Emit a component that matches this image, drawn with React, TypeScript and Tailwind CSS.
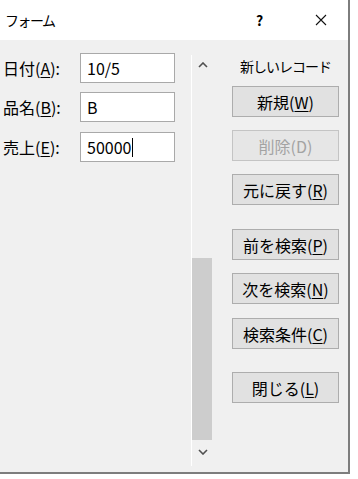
import React from "react";

const FONT = { fontFamily: '"Noto Sans CJK JP", "Noto Sans", sans-serif' };

function U({ c }: { c: string }) {
  return <span className="underline underline-offset-2 decoration-1">{c}</span>;
}

function Row({ label, k, value, caret, mt }: { label: string; k: string; value: string; caret?: boolean; mt: string }) {
  return (
    <div className={`flex items-center h-[30px] ${mt}`}>
      <div className="w-[80px] pl-[3px] text-[16px] leading-none text-black">
        {label}(<U c={k} />):
      </div>
      <div className="w-[95px] h-[30px] bg-white border border-[#a9a9a9] flex items-center pl-[6px] text-[16px] leading-none text-black">
        {value}
        {caret && <span className="inline-block w-px h-[19px] bg-black ml-px" />}
      </div>
    </div>
  );
}

function Btn({ label, k, disabled, mt }: { label: string; k: string; disabled?: boolean; mt: string }) {
  return (
    <div
      className={`w-[107px] h-[31px] flex items-center justify-center text-[16px] leading-none border ${mt} ${
        disabled ? "bg-[#e6e6e6] border-[#c4c4c4] text-[#a3a3a3]" : "bg-[#e1e1e1] border-[#adadad] text-black"
      }`}
    >
      {label}(
      {disabled ? k : <U c={k} />})
    </div>
  );
}

export default function App() {
  return (
    <div className="w-[358px] h-[479px] bg-white" style={FONT}>
      <div className="w-[350px] h-[474px] flex flex-col border-r-2 border-b-2 border-[#7d7d7d]">
        <div className="h-[40px] bg-white flex items-center shrink-0">
          <div className="pl-[5px] text-[14px] tracking-[-1.5px] leading-none text-black">フォーム</div>
          <div className="flex-1" />
          <div className="w-[12px] text-[14px] font-semibold leading-none text-black mr-[47px]">?</div>
          <svg width="12" height="12" viewBox="0 0 12 12" className="mr-[21px]">
            <path d="M1 1 L11 11 M11 1 L1 11" stroke="#111" strokeWidth="1.1" fill="none" />
          </svg>
        </div>
        <div className="flex-1 bg-[#f0f0f0] flex">
          <div className="w-[191px] pt-[13px] flex flex-col">
            <Row label="日付" k="A" value="10/5" mt="" />
            <Row label="品名" k="B" value="B" mt="mt-[9px]" />
            <Row label="売上" k="E" value="50000" caret mt="mt-[10px]" />
          </div>
          <div className="w-[22px] pt-[15px] pb-[6px] flex flex-col">
            <div className="flex-1 border-l border-white flex flex-col">
              <div className="h-[20px] flex items-center justify-center">
                <svg width="10" height="6" viewBox="0 0 10 6">
                  <path d="M1 5 L5 1 L9 5" stroke="#505050" strokeWidth="1.6" fill="none" />
                </svg>
              </div>
              <div className="h-[183px]" />
              <div className="w-[20px] h-[182px] bg-[#cdcdcd]" />
              <div className="h-[24px] flex items-center justify-center">
                <svg width="10" height="6" viewBox="0 0 10 6">
                  <path d="M1 1 L5 5 L9 1" stroke="#505050" strokeWidth="1.6" fill="none" />
                </svg>
              </div>
            </div>
          </div>
          <div className="flex-1 flex flex-col pl-[19px] pt-[17px]">
            <div className="w-[107px] text-center text-[14px] tracking-[-1px] leading-none text-black h-[18px] flex items-center justify-center">
              新しいレコード
            </div>
            <Btn label="新規" k="W" mt="mt-[11px]" />
            <Btn label="削除" k="D" disabled mt="mt-[13px]" />
            <Btn label="元に戻す" k="R" mt="mt-[13px]" />
            <Btn label="前を検索" k="P" mt="mt-[24px]" />
            <Btn label="次を検索" k="N" mt="mt-[13px]" />
            <Btn label="検索条件" k="C" mt="mt-[14px]" />
            <Btn label="閉じる" k="L" mt="mt-[23px]" />
          </div>
        </div>
      </div>
    </div>
  );
}
